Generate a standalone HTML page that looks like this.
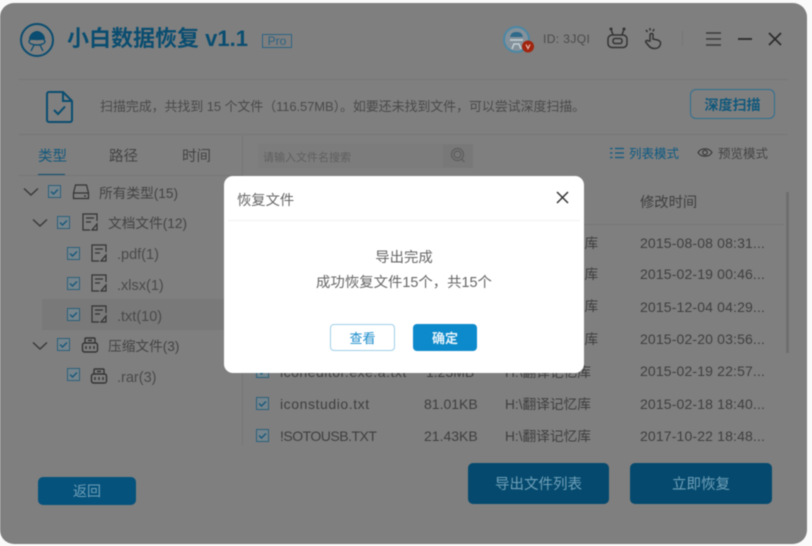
<!DOCTYPE html>
<html lang="zh"><head><meta charset="utf-8"><style>
html,body{margin:0;padding:0;width:812px;height:546px;overflow:hidden;background:#fafafa}
body{font-family:"Liberation Sans","Noto Sans CJK SC",sans-serif;position:relative}
#w{position:absolute;left:0;top:3px;width:807px;height:541px;background:#7f7f7f;border-radius:14px;overflow:hidden}
#r{position:absolute;left:0;top:0;width:812px;height:546px;filter:blur(.45px)}
.t{position:absolute;white-space:nowrap;line-height:20px;color:#3f3f3f}
.a{position:absolute}
.l{position:absolute;background:#777}
.cb{position:absolute;width:11px;height:11px;border:1.5px solid #2a6078;background:#76858d}
.cb svg{position:absolute;left:0;top:0;width:11px;height:11px}
.btn{position:absolute;background:#054a6e;border-radius:5px;color:#6f9fb8;text-align:center}
</style></head><body>
<div id="r">
<div id="w"></div>

<svg class="a" style="left:20px;top:23px" width="35" height="35" viewBox="0 0 35 35" fill="none">
<circle cx="17" cy="17" r="16" stroke="#0a4d70" stroke-width="2"/>
<path d="M9 16c0-4 4-8 8-8s8 4 8 8c-3 1.500-13 1.500-16 0z" fill="#0a4d70"/>
<ellipse cx="17" cy="18.500" rx="8" ry="3.500" stroke="#0a4d70" stroke-width="1.300"/>
<path d="M11 28l3-6h6l3 6" stroke="#0a4d70" stroke-width="1.300"/>
</svg>
<div class="t" style="left:67px;top:25px;font-size:22px;line-height:28px;font-weight:700;color:#0a4d70">小白数据恢复 v1.1</div>
<div class="t" style="left:262px;top:34px;width:28px;height:12px;border:1px solid #2b6484;font-size:12px;line-height:12px;text-align:center;color:#2b6484">Pro</div>

<svg class="a" style="left:503px;top:26px" width="33" height="28" viewBox="0 0 33 28" fill="none">
<circle cx="13.500" cy="13.500" r="12.500" stroke="#4a88a6" stroke-width="2" fill="#85919a"/>
<path d="M7 11c1-4 3-5 6.500-5s5.500 1 6.500 5z" fill="#2f6a8a"/>
<path d="M7 14h13M9 23l2-5h5l2 5" stroke="#c4d0d6" stroke-width="1.500"/>
<circle cx="25" cy="20.500" r="6" fill="#a1250f"/>
<path d="M23 18.500l2 4 2-4" stroke="#e6b9ae" stroke-width="1.200"/>
</svg>
<div class="t" style="left:543px;top:29px;font-size:12px;letter-spacing:.4px;color:#4a4a4a">ID: 3JQI</div>
<svg class="a" style="left:606px;top:27px" width="24" height="22" viewBox="0 0 24 22" fill="none" stroke="#333" stroke-width="1.500">
<rect x="2" y="8" width="19" height="12.500" rx="4"/><rect x="7" y="11.500" width="9" height="5" rx="2"/>
<path d="M7 8l-1.500-4.500M16 8l1.500-4.500"/><circle cx="5" cy="2" r=".8"/><circle cx="18" cy="2" r=".8"/>
</svg>
<svg class="a" style="left:644px;top:27px" width="20" height="23" viewBox="0 0 20 23" fill="none" stroke="#333" stroke-width="1.500">
<path d="M2 3l1.500 2M6 1v2.500M10 2L9 4.500"/>
<path d="M6 14V8c0-2 3-2 3 0v4l4.500 1c2 .5 3.500 2 3 4-.7 3-3 4.500-6 4.500-3 0-4.500-1-6-3l-2.500-3c-1-1.500 1-3 2.500-1.500z"/>
</svg>
<div class="l" style="left:682px;top:31px;width:1px;height:15px;background:#767676"></div>
<svg class="a" style="left:704px;top:28px" width="80" height="22" viewBox="0 0 80 22" fill="none" stroke="#2b2b2b" stroke-width="1.600">
<path d="M2 5h15M2 11h15M2 17h15" stroke="#3a3a3a"/>
<path d="M34 11h14" stroke-width="1.800"/>
<path d="M65 5l12 12M77 5L65 17" stroke-width="1.700"/>
</svg>

<div class="l" style="left:18px;top:79px;width:770px;height:1px"></div>
<div class="l" style="left:18px;top:134px;width:770px;height:1px"></div>

<svg class="a" style="left:45px;top:90px" width="29" height="34" viewBox="0 0 29 34" fill="none" stroke="#0a4d70" stroke-width="2">
<path d="M4 2h14l9 9v19a2 2 0 0 1-2 2H4a2 2 0 0 1-2-2V4a2 2 0 0 1 2-2z" stroke-linejoin="round"/>
<path d="M18 2v9h9M9 20l4 4 7-7.500"/>
</svg>
<div class="t" style="left:100px;top:97px;font-size:13px;letter-spacing:-.1px;color:#4a4a4a">扫描完成，共找到 15 个文件（116.57MB）。如要还未找到文件，可以尝试深度扫描。</div>
<div class="a" style="left:690px;top:89px;width:83px;height:28px;border:1px solid #2f7090;border-radius:6px;box-sizing:content-box;text-align:center;line-height:30px;font-size:14px;font-weight:700;color:#10587c">深度扫描</div>

<div class="t" style="left:38px;top:147px;font-size:14.500px;color:#14597c">类型</div>
<div class="t" style="left:109px;top:147px;font-size:14.500px;color:#444">路径</div>
<div class="t" style="left:182px;top:147px;font-size:14.500px;color:#444">时间</div>
<div class="a" style="left:38px;top:174px;width:27px;height:2px;background:#0a4d70"></div>
<div class="l" style="left:18px;top:175px;width:224px;height:1px"></div>
<div class="l" style="left:242px;top:135px;width:1px;height:310px"></div>

<div class="a" style="left:258px;top:144px;width:185px;height:24px;background:#7c7c7c"></div>
<div class="t" style="left:263px;top:148px;font-size:11px;color:#5f5f5f">请输入文件名搜索</div>
<div class="a" style="left:443px;top:144px;width:30px;height:24px;background:#787878"></div>
<svg class="a" style="left:449px;top:147px" width="18" height="17" viewBox="0 0 18 17" fill="none" stroke="#5c5c5c" stroke-width="1.200"><circle cx="8.500" cy="7.500" r="6"/><circle cx="8.500" cy="7.500" r="3.500"/><path d="M12.500 12l3 3"/></svg>

<svg class="a" style="left:609px;top:146px" width="16" height="14" viewBox="0 0 16 14" fill="none" stroke="#0c5a82" stroke-width="1.300"><path d="M6 2.500h9M6 7h9M6 11.500h9M1 2.500h2.500M1 7h2.500M1 11.500h2.500"/></svg>
<div class="t" style="left:629px;top:144px;font-size:12.500px;color:#0c5a82">列表模式</div>
<svg class="a" style="left:697px;top:146px" width="16" height="13" viewBox="0 0 16 13" fill="none" stroke="#333" stroke-width="1.100"><path d="M1 6.500C4 1.500 12 1.500 15 6.500 12 11.500 4 11.500 1 6.500z"/><circle cx="8" cy="6.500" r="2.300"/></svg>
<div class="t" style="left:718px;top:144px;font-size:12.500px;color:#454545">预览模式</div>

<div class="a" style="left:42px;top:299px;width:182px;height:31px;background:#797979"></div>

<svg class="a" style="left:23px;top:185px" width="60" height="200" viewBox="0 0 60 200" fill="none" stroke="#3a3a3a" stroke-width="1.500">
<path d="M1 3.500l7 6.500 7-6.500M10 34.500l7 6.500 7-6.500M10 157.500l7 6.500 7-6.500"/>
</svg>

<div class="cb" style="left:48px;top:185px"><svg viewBox="0 0 11 11" fill="none" stroke="#17577a" stroke-width="1.400"><path d="M2 5.500l2.500 2.500 4.500-4.500"/></svg></div>
<div class="cb" style="left:57px;top:216px"><svg viewBox="0 0 11 11" fill="none" stroke="#17577a" stroke-width="1.400"><path d="M2 5.500l2.500 2.500 4.500-4.500"/></svg></div>
<div class="cb" style="left:67px;top:247px"><svg viewBox="0 0 11 11" fill="none" stroke="#17577a" stroke-width="1.400"><path d="M2 5.500l2.500 2.500 4.500-4.500"/></svg></div>
<div class="cb" style="left:67px;top:277px"><svg viewBox="0 0 11 11" fill="none" stroke="#17577a" stroke-width="1.400"><path d="M2 5.500l2.500 2.500 4.500-4.500"/></svg></div>
<div class="cb" style="left:67px;top:308px"><svg viewBox="0 0 11 11" fill="none" stroke="#17577a" stroke-width="1.400"><path d="M2 5.500l2.500 2.500 4.500-4.500"/></svg></div>
<div class="cb" style="left:57px;top:338px"><svg viewBox="0 0 11 11" fill="none" stroke="#17577a" stroke-width="1.400"><path d="M2 5.500l2.500 2.500 4.500-4.500"/></svg></div>
<div class="cb" style="left:67px;top:368px"><svg viewBox="0 0 11 11" fill="none" stroke="#17577a" stroke-width="1.400"><path d="M2 5.500l2.500 2.500 4.500-4.500"/></svg></div>

<svg class="a" style="left:72px;top:183px" width="18" height="18" viewBox="0 0 18 18" fill="none" stroke="#333" stroke-width="1.200"><path d="M1.500 10l2-8h11l2 8v5.500h-15zM1.500 10h15M12 13h2"/></svg>
<svg class="a" style="left:81px;top:212px" width="18" height="20" viewBox="0 0 18 20" fill="none" stroke="#333" stroke-width="1.200"><path d="M16 9V2H2v16h7M5 6h8M5 10h5M11 18l5-6v6z"/></svg>
<svg class="a" style="left:90px;top:243px" width="18" height="20" viewBox="0 0 18 20" fill="none" stroke="#333" stroke-width="1.200"><path d="M16 9V2H2v16h7M5 6h8M5 10h5M11 18l5-6v6z"/></svg>
<svg class="a" style="left:90px;top:273px" width="18" height="20" viewBox="0 0 18 20" fill="none" stroke="#333" stroke-width="1.200"><path d="M16 9V2H2v16h7M5 6h8M5 10h5M11 18l5-6v6z"/></svg>
<svg class="a" style="left:90px;top:304px" width="18" height="20" viewBox="0 0 18 20" fill="none" stroke="#333" stroke-width="1.200"><path d="M16 9V2H2v16h7M5 6h8M5 10h5M11 18l5-6v6z"/></svg>
<svg class="a" style="left:81px;top:336px" width="18" height="18" viewBox="0 0 18 18" fill="none" stroke="#333" stroke-width="1.400"><path d="M4 7V3a1 1 0 0 1 1-1h8a1 1 0 0 1 1 1v4M1.500 9a2 2 0 0 1 2-2h11a2 2 0 0 1 2 2v5a2 2 0 0 1-2 2h-11a2 2 0 0 1-2-2zM5 10v3M9 10v3M13 10v3M7 4.500h4"/></svg>
<svg class="a" style="left:90px;top:367px" width="18" height="18" viewBox="0 0 18 18" fill="none" stroke="#333" stroke-width="1.400"><path d="M4 7V3a1 1 0 0 1 1-1h8a1 1 0 0 1 1 1v4M1.500 9a2 2 0 0 1 2-2h11a2 2 0 0 1 2 2v5a2 2 0 0 1-2 2h-11a2 2 0 0 1-2-2zM5 10v3M9 10v3M13 10v3M7 4.500h4"/></svg>

<div class="t" style="left:99px;top:184px;font-size:13.700px;color:#444">所有类型(15)</div>
<div class="t" style="left:108px;top:214px;font-size:13.700px;color:#444">文档文件(12)</div>
<div class="t" style="left:117px;top:245px;font-size:14.500px;color:#4a4a4a">.pdf(1)</div>
<div class="t" style="left:117px;top:276px;font-size:14.500px;color:#4a4a4a">.xlsx(1)</div>
<div class="t" style="left:117px;top:307px;font-size:14.500px;color:#4a4a4a">.txt(10)</div>
<div class="t" style="left:108px;top:337px;font-size:13.700px;color:#444">压缩文件(3)</div>
<div class="t" style="left:117px;top:368px;font-size:14.500px;color:#4a4a4a">.rar(3)</div>

<div class="l" style="left:584px;top:224px;width:200px;height:1px"></div>
<div class="t" style="left:640px;top:193px;font-size:14.300px;color:#3f3f3f">修改时间</div>
<div class="a" style="left:786px;top:192px;width:3px;height:161px;background:#6e6e6e"></div>

<div class="t" style="left:584.500px;top:234px;font-size:13.700px;color:#404040">库</div>
<div class="t" style="left:584.500px;top:265px;font-size:13.700px;color:#404040">库</div>
<div class="t" style="left:584.500px;top:297px;font-size:13.700px;color:#404040">库</div>
<div class="t" style="left:584.500px;top:330px;font-size:13.700px;color:#404040">库</div>

<div class="t" style="left:640px;top:233px;font-size:14px;letter-spacing:.15px">2015-08-08 08:31...</div>
<div class="t" style="left:640px;top:264px;font-size:14px;letter-spacing:.15px">2015-02-19 00:46...</div>
<div class="t" style="left:640px;top:297px;font-size:14px;letter-spacing:.15px">2015-12-04 04:29...</div>
<div class="t" style="left:640px;top:329px;font-size:14px;letter-spacing:.15px">2015-02-20 03:56...</div>
<div class="t" style="left:640px;top:361px;font-size:14px;letter-spacing:.15px">2015-02-19 22:57...</div>
<div class="t" style="left:640px;top:394px;font-size:14px;letter-spacing:.15px">2015-02-18 18:40...</div>
<div class="t" style="left:640px;top:426px;font-size:14px;letter-spacing:.15px">2017-10-22 18:48...</div>

<div class="cb" style="left:256px;top:365px"><svg viewBox="0 0 11 11" fill="none" stroke="#17577a" stroke-width="1.400"><path d="M2 5.500l2.500 2.500 4.500-4.500"/></svg></div>
<div class="t" style="left:280px;top:362px;font-size:14px;letter-spacing:.5px">iconeditor.exe.a.txt</div>
<div class="t" style="left:426px;top:362px;font-size:14px">1.23MB</div>
<div class="t" style="left:505px;top:363px;font-size:13.700px">H:\翻译记忆库</div>

<div class="cb" style="left:256px;top:397px"><svg viewBox="0 0 11 11" fill="none" stroke="#17577a" stroke-width="1.400"><path d="M2 5.500l2.500 2.500 4.500-4.500"/></svg></div>
<div class="t" style="left:280px;top:394px;font-size:14px;letter-spacing:.57px">iconstudio.txt</div>
<div class="t" style="left:424px;top:394px;font-size:14px">81.01KB</div>
<div class="t" style="left:505px;top:395px;font-size:13.700px">H:\翻译记忆库</div>

<div class="cb" style="left:256px;top:429px"><svg viewBox="0 0 11 11" fill="none" stroke="#17577a" stroke-width="1.400"><path d="M2 5.500l2.500 2.500 4.500-4.500"/></svg></div>
<div class="t" style="left:280px;top:426px;font-size:14px;letter-spacing:-.5px">!SOTOUSB.TXT</div>
<div class="t" style="left:424px;top:426px;font-size:14px">21.43KB</div>
<div class="t" style="left:505px;top:427px;font-size:13.700px">H:\翻译记忆库</div>

<div class="btn" style="left:38px;top:477px;width:98px;height:28px;line-height:29px;font-size:14px;background:#05527c">返回</div>
<div class="btn" style="left:468px;top:463px;width:141px;height:41px;line-height:45px;font-size:14.500px">导出文件列表</div>
<div class="btn" style="left:630px;top:463px;width:142px;height:41px;line-height:45px;font-size:14.500px">立即恢复</div>

<div class="a" style="left:224px;top:176px;width:360px;height:197px;background:#fff;border-radius:9px"></div>
<div class="a" style="left:228px;top:220px;width:352px;height:1px;background:#f2f2f2"></div>
<div class="t" style="left:237px;top:191px;font-size:14.300px;color:#666">恢复文件</div>
<svg class="a" style="left:556px;top:191px" width="13" height="13" viewBox="0 0 13 13" fill="none" stroke="#333" stroke-width="1.500"><path d="M1 1l11 11M12 1L1 12"/></svg>
<div class="t" style="left:224px;top:248px;width:360px;text-align:center;font-size:14.400px;color:#666">导出完成</div>
<div class="t" style="left:224px;top:273px;width:360px;text-align:center;font-size:14.400px;color:#666">成功恢复文件15个，共15个</div>
<div class="a" style="left:330px;top:324px;width:63px;height:25px;border:1px solid #9fcfe8;border-radius:4px;text-align:center;line-height:27px;font-size:13px;color:#1b8ccb">查看</div>
<div class="a" style="left:413px;top:324px;width:64px;height:27px;background:#0d8acb;border-radius:4px;text-align:center;line-height:29px;font-size:13px;font-weight:700;color:#e6f3fa">确定</div>
</div>
</body></html>
